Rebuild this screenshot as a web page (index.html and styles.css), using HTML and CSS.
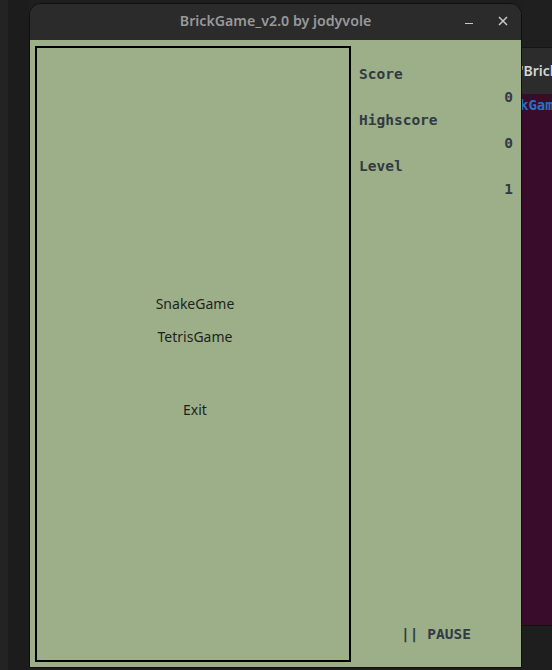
FILE: index.html
```html
<!DOCTYPE html>
<html>
<head>
<meta charset="utf-8">
<link rel="stylesheet" href="styles.css">
</head>
<body>
<div class="desk">
  <div class="left-strip"></div>
  <div class="window">
    <div class="titlebar">
      <span class="title">BrickGame_v2.0 by jodyvole</span>
      <div class="controls">
        <span class="min"></span>
        <svg class="close" width="10" height="10" viewBox="0 0 10 10"><path d="M1 1 L9 9 M9 1 L1 9" stroke="#c8c8c8" stroke-width="1.5" fill="none"/></svg>
      </div>
    </div>
    <div class="content">
      <div class="field">
        <div class="menu">
          <div class="item first">SnakeGame</div>
          <div class="item">TetrisGame</div>
          <div class="item exit">Exit</div>
        </div>
      </div>
      <div class="panel">
        <div class="label">Score</div>
        <div class="value">0</div>
        <div class="label">Highscore</div>
        <div class="value">0</div>
        <div class="label">Level</div>
        <div class="value">1</div>
        <div class="pause">|| PAUSE</div>
      </div>
    </div>
  </div>
  <div class="behind">
    <div class="b-top"></div>
    <div class="b-tab"><span>'Brick</span></div>
    <div class="b-term"><span>kGame</span></div>
    <div class="b-bottom"></div>
  </div>
</div>
</body>
</html>
```

FILE: styles.css
```css
html, body {
  margin: 0;
  padding: 0;
  background: #1e1e1e;
  width: 552px;
  height: 670px;
  overflow: hidden;
}

.desk {
  display: flex;
  width: 552px;
  height: 670px;
}

.left-strip {
  width: 29px;
  flex: none;
  background: linear-gradient(to right, #232323 0, #232323 8px, #1c1c1c 8px);
}

.window {
  width: 491px;
  flex: none;
  margin-top: 3px;
  height: 663px;
  border: 1px solid #0f0f0f;
  border-radius: 12px 12px 0 0;
  display: flex;
  flex-direction: column;
  overflow: hidden;
  background: #2b2b2b;
}

.titlebar {
  height: 36px;
  flex: none;
  background: #2b2b2b;
  display: flex;
  align-items: center;
  justify-content: center;
  position: relative;
}

.title {
  font-family: "Noto Sans", sans-serif;
  font-size: 14.2px;
  font-weight: 600;
  color: #999999;
  margin-top: -3px;
}

.controls {
  position: absolute;
  right: 0;
  top: 0;
  height: 36px;
  display: flex;
  align-items: center;
}

.min {
  display: block;
  width: 8px;
  height: 1px;
  background: #c8c8c8;
  margin-top: 3px;
  margin-right: 25px;
}

.close {
  display: block;
  margin-right: 13px;
  margin-top: -3px;
}

.content {
  flex: 1;
  background: #9caf88;
  display: flex;
  padding: 6px 0 5px 5px;
}

.field {
  width: 312px;
  height: 612px;
  border: 2px solid #000;
  flex: none;
}

.menu {
  display: flex;
  flex-direction: column;
  align-items: center;
  font-family: "Noto Sans", sans-serif;
  font-size: 14px;
  line-height: 20px;
  color: #1f1f1f;
  padding-left: 4px;
}

.item.first { margin-top: 246px; }
.item + .item { margin-top: 13px; }
.item.exit { margin-top: 53px; }

.panel {
  flex: 1;
  display: flex;
  flex-direction: column;
  padding: 17px 8px 16px 8px;
  font-family: "DejaVu Sans Mono", monospace;
  font-weight: bold;
  font-size: 14.5px;
  line-height: 23px;
  color: #323a44;
}

.value { text-align: right; }

.pause {
  margin-top: auto;
  text-align: center;
}

.behind {
  flex: 1;
  display: flex;
  flex-direction: column;
  overflow: hidden;
}

.b-top {
  height: 47px;
  background: #1f1f1f;
  border-bottom: 1px solid #151515;
  flex: none;
}

.b-tab {
  height: 46px;
  background: #2c2c2c;
  flex: none;
  font-family: "Noto Sans", sans-serif;
  font-weight: 600;
  font-size: 14px;
  color: #d6d6d6;
  line-height: 46px;
  white-space: nowrap;
  margin-left: -2px;
}

.b-term {
  height: 531px;
  background: #380c2a;
  flex: none;
  font-family: "DejaVu Sans Mono", monospace;
  font-weight: bold;
  font-size: 14px;
  color: #2c6fc4;
  line-height: 22px;
  white-space: nowrap;
  margin-left: -2px;
}

.b-bottom {
  flex: 1;
  border-top: 1px solid #111;
  background: #1e1e1e;
}
```
